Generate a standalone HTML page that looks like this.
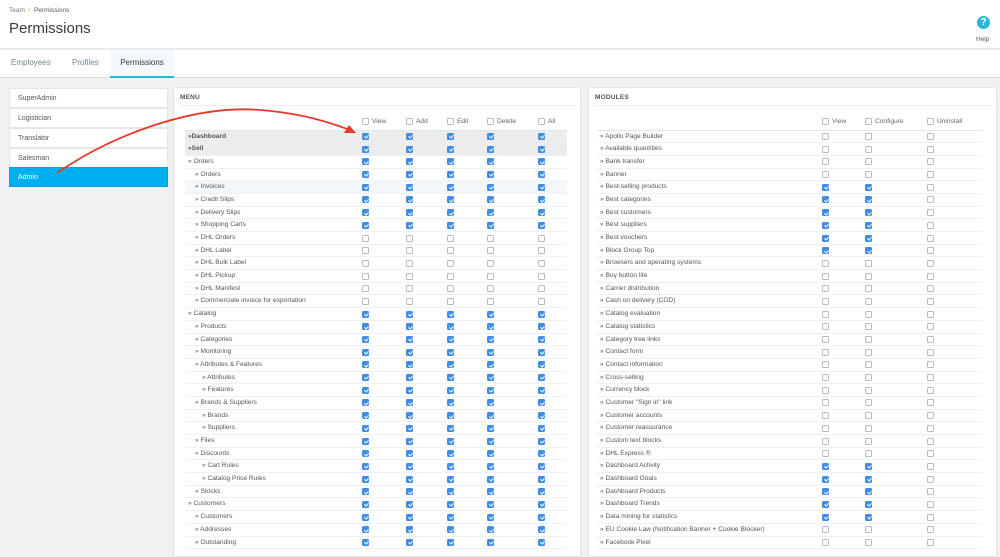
<!DOCTYPE html><html><head><style>
*{margin:0;padding:0;box-sizing:border-box}
body{width:1000px;height:546px;overflow:hidden;background:#eff1f2;font-family:"Liberation Sans",sans-serif;color:#555;position:relative;font-size:7px}
.hdr{position:absolute;left:0;top:0;width:1000px;height:49px;background:#fff;border-bottom:1px solid #e4e6e8}
.tabs{position:absolute;left:0;top:50px;width:1000px;height:28px;background:#fff;border-bottom:1px solid #dde0e2}
.tab{position:absolute;top:0;height:28px;line-height:26px;font-size:8px;color:#6c868e}
.panel{position:absolute;background:#fff;border:1px solid #e1e3e5;border-radius:3px}
.ph{position:absolute;left:6px;top:6px;font-size:6.5px;font-weight:bold;color:#555;letter-spacing:.2px}
.li{position:absolute;left:9px;width:159px;height:20px;background:#fff;border:1px solid #e5e5e5;font-size:7px;line-height:19px;padding-left:8px;color:#555}
.rows{position:absolute}
.r{position:relative;height:12.7px;line-height:12.7px;border-bottom:1px solid #f0f0f0;font-size:6.6px;color:#555}
.r.g{background:#ececec;font-weight:bold}
.r.h{background:#f2f8fb}
.k{position:absolute;top:2.5px;width:7px;height:7px;border:1px solid #bbb;border-radius:1.5px;background:#fff}
.k.c{background:#3d8fe6;border-color:#3d8fe6}
.k.c:after{content:"";position:absolute;left:1.6px;top:0.4px;width:1.5px;height:3px;border:solid #fff;border-width:0 1px 1px 0;transform:rotate(40deg)}
.m .k:nth-of-type(1){left:177px}.m .k:nth-of-type(2){left:221px}.m .k:nth-of-type(3){left:262px}.m .k:nth-of-type(4){left:302px}.m .k:nth-of-type(5){left:353px}
.d .k:nth-of-type(1){left:225px}.d .k:nth-of-type(2){left:268px}.d .k:nth-of-type(3){left:330px}
.l1{padding-left:3px}.l2{padding-left:10px}.l3{padding-left:17px}
.hc{position:absolute;font-size:6.6px;color:#666}
.hc .k{position:relative;display:inline-block;top:1.5px;margin-right:3px}
</style></head><body>
<div class="hdr">
<div style="position:absolute;left:9px;top:7px;font-size:6.5px;color:#777">Team &nbsp;<span style="color:#8bc34a">/</span>&nbsp; <span style="color:#555">Permissions</span></div>
<div style="position:absolute;left:9px;top:20px;font-size:15px;color:#363a41">Permissions</div>
<div style="position:absolute;left:977px;top:16px;width:13px;height:13px;border-radius:50%;background:#25b9d7;color:#fff;font-weight:bold;font-size:10px;text-align:center;line-height:13px">?</div>
<div style="position:absolute;left:976px;top:36px;font-size:6.5px;color:#555">Help</div>
</div>
<div class="tabs">
<div class="tab" style="left:11px">Employees</div>
<div class="tab" style="left:72px">Profiles</div>
<div class="tab" style="left:110px;width:64px;background:#f4f8fa;border-bottom:2px solid #25b9d7;text-align:center;color:#363a41">Permissions</div>
</div>
<div class="li" style="top:88px">SuperAdmin</div>
<div class="li" style="top:108px">Logistician</div>
<div class="li" style="top:128px">Translator</div>
<div class="li" style="top:148px">Salesman</div>
<div class="li" style="top:167px;background:#00aff0;border-color:#0a9fd8;color:#fff">Admin</div>

<div class="panel" style="left:173px;top:87px;width:408px;height:470px">
<div class="ph">MENU</div>
<div style="position:absolute;left:5px;top:17px;width:398px;border-top:1px solid #eee"></div>
</div>
<div class="hc" style="left:362px;top:116px"><i class="k"></i>View</div>
<div class="hc" style="left:406px;top:116px"><i class="k"></i>Add</div>
<div class="hc" style="left:447px;top:116px"><i class="k"></i>Edit</div>
<div class="hc" style="left:487px;top:116px"><i class="k"></i>Delete</div>
<div class="hc" style="left:538px;top:116px"><i class="k"></i>All</div>
<div class="rows m" style="left:185px;top:129.5px;width:382px;border-top:1px solid #d7e8f0">
<div class="r g"><span class="l1">»Dashboard</span><i class="k c"></i><i class="k c"></i><i class="k c"></i><i class="k c"></i><i class="k c"></i></div>
<div class="r g"><span class="l1">»Sell</span><i class="k c"></i><i class="k c"></i><i class="k c"></i><i class="k c"></i><i class="k c"></i></div>
<div class="r"><span class="l1">» Orders</span><i class="k c"></i><i class="k c"></i><i class="k c"></i><i class="k c"></i><i class="k c"></i></div>
<div class="r"><span class="l2">» Orders</span><i class="k c"></i><i class="k c"></i><i class="k c"></i><i class="k c"></i><i class="k c"></i></div>
<div class="r h"><span class="l2">» Invoices</span><i class="k c"></i><i class="k c"></i><i class="k c"></i><i class="k c"></i><i class="k c"></i></div>
<div class="r"><span class="l2">» Credit Slips</span><i class="k c"></i><i class="k c"></i><i class="k c"></i><i class="k c"></i><i class="k c"></i></div>
<div class="r"><span class="l2">» Delivery Slips</span><i class="k c"></i><i class="k c"></i><i class="k c"></i><i class="k c"></i><i class="k c"></i></div>
<div class="r"><span class="l2">» Shopping Carts</span><i class="k c"></i><i class="k c"></i><i class="k c"></i><i class="k c"></i><i class="k c"></i></div>
<div class="r"><span class="l2">» DHL Orders</span><i class="k"></i><i class="k"></i><i class="k"></i><i class="k"></i><i class="k"></i></div>
<div class="r"><span class="l2">» DHL Label</span><i class="k"></i><i class="k"></i><i class="k"></i><i class="k"></i><i class="k"></i></div>
<div class="r"><span class="l2">» DHL Bulk Label</span><i class="k"></i><i class="k"></i><i class="k"></i><i class="k"></i><i class="k"></i></div>
<div class="r"><span class="l2">» DHL Pickup</span><i class="k"></i><i class="k"></i><i class="k"></i><i class="k"></i><i class="k"></i></div>
<div class="r"><span class="l2">» DHL Manifest</span><i class="k"></i><i class="k"></i><i class="k"></i><i class="k"></i><i class="k"></i></div>
<div class="r"><span class="l2">» Commerciale invoice for exportation</span><i class="k"></i><i class="k"></i><i class="k"></i><i class="k"></i><i class="k"></i></div>
<div class="r"><span class="l1">» Catalog</span><i class="k c"></i><i class="k c"></i><i class="k c"></i><i class="k c"></i><i class="k c"></i></div>
<div class="r"><span class="l2">» Products</span><i class="k c"></i><i class="k c"></i><i class="k c"></i><i class="k c"></i><i class="k c"></i></div>
<div class="r"><span class="l2">» Categories</span><i class="k c"></i><i class="k c"></i><i class="k c"></i><i class="k c"></i><i class="k c"></i></div>
<div class="r"><span class="l2">» Monitoring</span><i class="k c"></i><i class="k c"></i><i class="k c"></i><i class="k c"></i><i class="k c"></i></div>
<div class="r"><span class="l2">» Attributes &amp; Features</span><i class="k c"></i><i class="k c"></i><i class="k c"></i><i class="k c"></i><i class="k c"></i></div>
<div class="r"><span class="l3">» Attributes</span><i class="k c"></i><i class="k c"></i><i class="k c"></i><i class="k c"></i><i class="k c"></i></div>
<div class="r"><span class="l3">» Features</span><i class="k c"></i><i class="k c"></i><i class="k c"></i><i class="k c"></i><i class="k c"></i></div>
<div class="r"><span class="l2">» Brands &amp; Suppliers</span><i class="k c"></i><i class="k c"></i><i class="k c"></i><i class="k c"></i><i class="k c"></i></div>
<div class="r"><span class="l3">» Brands</span><i class="k c"></i><i class="k c"></i><i class="k c"></i><i class="k c"></i><i class="k c"></i></div>
<div class="r"><span class="l3">» Suppliers</span><i class="k c"></i><i class="k c"></i><i class="k c"></i><i class="k c"></i><i class="k c"></i></div>
<div class="r"><span class="l2">» Files</span><i class="k c"></i><i class="k c"></i><i class="k c"></i><i class="k c"></i><i class="k c"></i></div>
<div class="r"><span class="l2">» Discounts</span><i class="k c"></i><i class="k c"></i><i class="k c"></i><i class="k c"></i><i class="k c"></i></div>
<div class="r"><span class="l3">» Cart Rules</span><i class="k c"></i><i class="k c"></i><i class="k c"></i><i class="k c"></i><i class="k c"></i></div>
<div class="r"><span class="l3">» Catalog Price Rules</span><i class="k c"></i><i class="k c"></i><i class="k c"></i><i class="k c"></i><i class="k c"></i></div>
<div class="r"><span class="l2">» Stocks</span><i class="k c"></i><i class="k c"></i><i class="k c"></i><i class="k c"></i><i class="k c"></i></div>
<div class="r"><span class="l1">» Customers</span><i class="k c"></i><i class="k c"></i><i class="k c"></i><i class="k c"></i><i class="k c"></i></div>
<div class="r"><span class="l2">» Customers</span><i class="k c"></i><i class="k c"></i><i class="k c"></i><i class="k c"></i><i class="k c"></i></div>
<div class="r"><span class="l2">» Addresses</span><i class="k c"></i><i class="k c"></i><i class="k c"></i><i class="k c"></i><i class="k c"></i></div>
<div class="r"><span class="l2">» Outstanding</span><i class="k c"></i><i class="k c"></i><i class="k c"></i><i class="k c"></i><i class="k c"></i></div>
</div>

<div class="panel" style="left:588px;top:87px;width:409px;height:470px">
<div class="ph">MODULES</div>
<div style="position:absolute;left:5px;top:17px;width:399px;border-top:1px solid #eee"></div>
</div>
<div class="hc" style="left:822px;top:116px"><i class="k"></i>View</div>
<div class="hc" style="left:865px;top:116px"><i class="k"></i>Configure</div>
<div class="hc" style="left:927px;top:116px"><i class="k"></i>Uninstall</div>
<div class="rows d" style="left:597px;top:129.5px;width:385px;border-top:1px solid #d7e8f0">
<div class="r"><span class="l1">» Apollo Page Builder</span><i class="k"></i><i class="k"></i><i class="k"></i></div>
<div class="r"><span class="l1">» Available quantities</span><i class="k"></i><i class="k"></i><i class="k"></i></div>
<div class="r"><span class="l1">» Bank transfer</span><i class="k"></i><i class="k"></i><i class="k"></i></div>
<div class="r"><span class="l1">» Banner</span><i class="k"></i><i class="k"></i><i class="k"></i></div>
<div class="r"><span class="l1">» Best-selling products</span><i class="k c"></i><i class="k c"></i><i class="k"></i></div>
<div class="r"><span class="l1">» Best categories</span><i class="k c"></i><i class="k c"></i><i class="k"></i></div>
<div class="r"><span class="l1">» Best customers</span><i class="k c"></i><i class="k c"></i><i class="k"></i></div>
<div class="r"><span class="l1">» Best suppliers</span><i class="k c"></i><i class="k c"></i><i class="k"></i></div>
<div class="r"><span class="l1">» Best vouchers</span><i class="k c"></i><i class="k c"></i><i class="k"></i></div>
<div class="r"><span class="l1">» Block Group Top</span><i class="k c"></i><i class="k c"></i><i class="k"></i></div>
<div class="r"><span class="l1">» Browsers and operating systems</span><i class="k"></i><i class="k"></i><i class="k"></i></div>
<div class="r"><span class="l1">» Buy button lite</span><i class="k"></i><i class="k"></i><i class="k"></i></div>
<div class="r"><span class="l1">» Carrier distribution</span><i class="k"></i><i class="k"></i><i class="k"></i></div>
<div class="r"><span class="l1">» Cash on delivery (COD)</span><i class="k"></i><i class="k"></i><i class="k"></i></div>
<div class="r"><span class="l1">» Catalog evaluation</span><i class="k"></i><i class="k"></i><i class="k"></i></div>
<div class="r"><span class="l1">» Catalog statistics</span><i class="k"></i><i class="k"></i><i class="k"></i></div>
<div class="r"><span class="l1">» Category tree links</span><i class="k"></i><i class="k"></i><i class="k"></i></div>
<div class="r"><span class="l1">» Contact form</span><i class="k"></i><i class="k"></i><i class="k"></i></div>
<div class="r"><span class="l1">» Contact information</span><i class="k"></i><i class="k"></i><i class="k"></i></div>
<div class="r"><span class="l1">» Cross-selling</span><i class="k"></i><i class="k"></i><i class="k"></i></div>
<div class="r"><span class="l1">» Currency block</span><i class="k"></i><i class="k"></i><i class="k"></i></div>
<div class="r"><span class="l1">» Customer "Sign in" link</span><i class="k"></i><i class="k"></i><i class="k"></i></div>
<div class="r"><span class="l1">» Customer accounts</span><i class="k"></i><i class="k"></i><i class="k"></i></div>
<div class="r"><span class="l1">» Customer reassurance</span><i class="k"></i><i class="k"></i><i class="k"></i></div>
<div class="r"><span class="l1">» Custom text blocks</span><i class="k"></i><i class="k"></i><i class="k"></i></div>
<div class="r"><span class="l1">» DHL Express ®</span><i class="k"></i><i class="k"></i><i class="k"></i></div>
<div class="r"><span class="l1">» Dashboard Activity</span><i class="k c"></i><i class="k c"></i><i class="k"></i></div>
<div class="r"><span class="l1">» Dashboard Goals</span><i class="k c"></i><i class="k c"></i><i class="k"></i></div>
<div class="r"><span class="l1">» Dashboard Products</span><i class="k c"></i><i class="k c"></i><i class="k"></i></div>
<div class="r"><span class="l1">» Dashboard Trends</span><i class="k c"></i><i class="k c"></i><i class="k"></i></div>
<div class="r"><span class="l1">» Data mining for statistics</span><i class="k c"></i><i class="k c"></i><i class="k"></i></div>
<div class="r"><span class="l1">» EU Cookie Law (Notification Banner + Cookie Blocker)</span><i class="k"></i><i class="k"></i><i class="k"></i></div>
<div class="r"><span class="l1">» Facebook Pixel</span><i class="k"></i><i class="k"></i><i class="k"></i></div>
</div>

<svg style="position:absolute;left:0;top:0" width="1000" height="546">
<path d="M57 173 C 120 130, 200 105, 260 110 C 300 113, 330 122, 352 131" fill="none" stroke="#e8382a" stroke-width="1.8"/>
<path d="M356 133 L344 133 L349 125 Z" fill="#e8382a"/>
</svg>
</body></html>
